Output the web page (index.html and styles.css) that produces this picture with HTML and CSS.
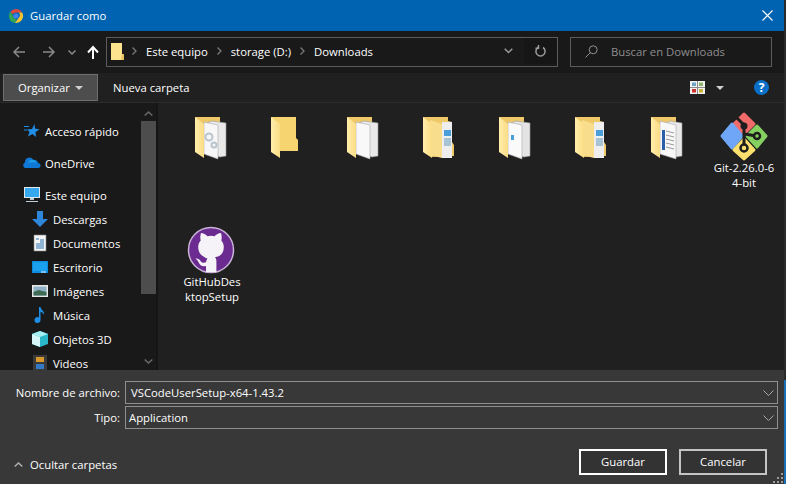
FILE: index.html
```html
<!DOCTYPE html>
<html lang="es">
<head>
    <meta charset="UTF-8">
    <title>Guardar como</title>
    <link rel="stylesheet" href="styles.css">
</head>
<body>
    <svg class="defs" width="0" height="0">
        <defs>
            <linearGradient id="flap" x1="0" y1="0" x2="1" y2="0">
                <stop offset="0" stop-color="#ffeeab"/>
                <stop offset="1" stop-color="#fbdc85"/>
            </linearGradient>
            <symbol id="folder-back" viewBox="0 0 48 48">
                <path d="M11 5H36V41H20Z" fill="#eec869"/>
            </symbol>
            <symbol id="folder-flap" viewBox="0 0 48 48">
                <path d="M11 5L20 12V46L11 40Z" fill="url(#flap)"/>
            </symbol>
        </defs>
    </svg>

    <div class="dialog">
        <div class="titlebar">
            <svg class="chrome-logo" width="14" height="14" viewBox="0 0 14 14">
                <path d="M7 0A7 7 0 0 1 13.1 3.6H7A3.4 3.4 0 0 0 3.8 5.6L1.5 2.7A7 7 0 0 1 7 0Z" fill="#e0483a"/>
                <path d="M1.5 2.7L4.3 7.8A3.4 3.4 0 0 0 7.8 10.3L6 14A7 7 0 0 1 1.5 2.7Z" fill="#34a653"/>
                <path d="M13.1 3.6A7 7 0 0 1 6 14L9.6 9A3.4 3.4 0 0 0 9.7 3.6Z" fill="#f8c530"/>
                <circle cx="7" cy="7" r="2.6" fill="#3f82ed"/>
            </svg>
            <span class="title">Guardar como</span>
            <svg class="close" width="11" height="11" viewBox="0 0 11 11">
                <path d="M.5.5l10 10M10.5.5l-10 10" stroke="#fff" stroke-width="1.1"/>
            </svg>
        </div>

        <div class="navbar">
            <div class="nav-buttons">
                <svg width="12" height="12" viewBox="0 0 12 12"><path d="M6 1L1 6l5 5M1 6h11" class="arrow-dim"/></svg>
                <svg class="nav-forward" width="12" height="12" viewBox="0 0 12 12"><path d="M6 1l5 5-5 5M11 6H0" class="arrow-dim"/></svg>
                <svg class="nav-recent" width="8" height="5" viewBox="0 0 8 5"><path d="M.5.5L4 4 7.5.5" class="arrow-dim"/></svg>
                <svg class="nav-up" width="12" height="13" viewBox="0 0 12 13"><path d="M1 6.5L6 1l5 5.500M6 1v12" class="arrow-up"/></svg>
            </div>
            <div class="address">
                <svg class="address-folder" width="14" height="17" viewBox="0 0 14 17"><path d="M0 0H11V11L13 12.500V17H0Z" fill="#fde38e"/><path d="M11 11h2v6h-3z" fill="#e8c25f"/></svg>
                <svg class="crumb-sep" width="5" height="8" viewBox="0 0 5 8"><path d="M.5.5L4 4 .5 7.500"/></svg>
                <span>Este equipo</span>
                <svg class="crumb-sep" width="5" height="8" viewBox="0 0 5 8"><path d="M.5.5L4 4 .5 7.500"/></svg>
                <span>storage (D:)</span>
                <svg class="crumb-sep" width="5" height="8" viewBox="0 0 5 8"><path d="M.5.5L4 4 .5 7.500"/></svg>
                <span>Downloads</span>
                <svg class="address-drop" width="9" height="6" viewBox="0 0 9 6"><path d="M.7.7L4.500 4.500 8.300.7"/></svg>
                <div class="address-refresh">
                    <svg width="11" height="12" viewBox="0 0 11 12"><path d="M3 2.500A4.600 4.600 0 1 0 8 2.500M3.500 0v3.200H.5"/></svg>
                </div>
            </div>
            <div class="search">
                <svg width="13" height="13" viewBox="0 0 13 13"><circle cx="8.200" cy="4.800" r="4"/><path d="M5.400 7.600L.5 12.500"/></svg>
                <span>Buscar en Downloads</span>
            </div>
        </div>

        <div class="commandbar">
            <div class="organize">Organizar<i class="caret"></i></div>
            <div class="new-folder">Nueva carpeta</div>
            <svg class="view-icon" width="15" height="13" viewBox="0 0 15 13">
                <rect width="15" height="13" fill="#f2f2f2"/>
                <path d="M7.500 0v13M0 6.500h15" stroke="#8a8a8a"/>
                <rect x="2" y="1.500" width="4" height="3.500" fill="#6fa5c9"/>
                <rect x="9" y="1.500" width="4" height="3.500" fill="#8fb36a"/>
                <rect x="2" y="8" width="4" height="3.500" fill="#c8352c"/>
                <rect x="9" y="8" width="4" height="3.500" fill="#c9b23a"/>
            </svg>
            <i class="caret view-caret"></i>
            <div class="help">?</div>
        </div>

        <div class="main">
            <div class="sidebar">
                <div class="tree">
                    <div class="tree-item top">
                        <svg width="16" height="16" viewBox="0 0 16 16"><path d="M10.500 1L11 5.500 15.500 6.500 11.500 9 12 14 8.500 11 4 13.500 5.500 9 3 6.500 8 6Z" fill="#1f8fe8"/><path d="M0 3.500h5M0 7h3" stroke="#1f8fe8"/></svg>
                        Acceso rápido
                    </div>
                    <div class="tree-item top gap">
                        <svg width="16" height="16" viewBox="0 0 16 16"><path d="M1 13a3 3 0 0 1 0-5.500A4.500 4.500 0 0 1 9.500 5 3.500 3.500 0 0 1 14 8a2.600 2.600 0 0 1 1 5Z" fill="#0f78d4"/><path d="M4 7.500A4.500 4.500 0 0 1 9.500 5 3.500 3.500 0 0 1 12.500 7.500Z" fill="#1c9be6"/></svg>
                        OneDrive
                    </div>
                    <div class="tree-item top gap">
                        <svg width="16" height="16" viewBox="0 0 16 16"><rect width="16" height="11" fill="#e0e8ee"/><rect x="1" y="1" width="14" height="9" fill="#35a8ee"/><path d="M6 11h4v2H6zM2 14h12v1H2z" fill="#c2ccd4"/></svg>
                        Este equipo
                    </div>
                    <div class="tree-item">
                        <svg width="16" height="16" viewBox="0 0 16 16"><path d="M5 0h6v8h5l-8 8-8-8h5Z" fill="#2e86d8"/></svg>
                        Descargas
                    </div>
                    <div class="tree-item">
                        <svg width="16" height="16" viewBox="0 0 16 16"><path d="M2 0h12v16H2Z" fill="#f4f4f4" stroke="#888" stroke-width=".6"/><path d="M4 4h3M8 5h4M8 7h4M4 9h8M4 11h8M4 13h8" stroke="#2c74b8"/></svg>
                        Documentos
                    </div>
                    <div class="tree-item">
                        <svg width="16" height="16" viewBox="0 0 16 16"><rect y="2" width="16" height="12" fill="#0d8ae0"/><rect x="1" y="3" width="14" height="9" fill="#1ba0ef"/><path d="M9 13h5" stroke="#e8f4fc"/></svg>
                        Escritorio
                    </div>
                    <div class="tree-item">
                        <svg width="16" height="16" viewBox="0 0 16 16"><rect y="2" width="16" height="12" fill="#e8e8e8"/><rect x="1.500" y="3.500" width="13" height="9" fill="#8fb2c8"/><path d="M1.500 9l5-2 8 2v3.500h-13Z" fill="#3f6b55"/></svg>
                        Imágenes
                    </div>
                    <div class="tree-item">
                        <svg width="16" height="16" viewBox="0 0 16 16"><path d="M7 0h1.500c.5 3 4 3.500 3.500 8-.8-2-2.200-3-3.500-3.200V13a3 3 0 1 1-1.500-2.500Z" fill="#1e8fe6"/></svg>
                        Música
                    </div>
                    <div class="tree-item">
                        <svg width="16" height="16" viewBox="0 0 16 16"><path d="M8 0l8 3v10l-8 3-8-3V3Z" fill="#2ab7c9"/><path d="M8 0l8 3-8 3-8-3Z" fill="#a5eef2"/><path d="M0 3l8 3v10l-8-3Z" fill="#d6f6f7"/></svg>
                        Objetos 3D
                    </div>
                    <div class="tree-item">
                        <svg width="16" height="16" viewBox="0 0 16 16"><rect x="1" width="14" height="16" fill="#3a3a3a"/><rect x="4" y="2" width="8" height="5" fill="#d9982b"/><rect x="4" y="9" width="8" height="5" fill="#3479c4"/></svg>
                        Videos
                    </div>
                </div>
                <div class="scrollbar">
                    <svg width="9" height="5" viewBox="0 0 9 5"><path d="M.7 4.500L4.500 1 8.300 4.500"/></svg>
                    <div class="thumb"></div>
                    <svg width="9" height="5" viewBox="0 0 9 5"><path d="M.7.5L4.500 4 8.300.5"/></svg>
                </div>
            </div>

            <div class="files">
                <div class="file">
                    <svg width="48" height="48" viewBox="4 0 48 48">
                        <use href="#folder-back"/>
                        <path d="M28 9l14 2V44l-6 1-16-5V12Z" fill="#e9e9e9" stroke="#9a9a9a" stroke-width=".6"/>
                        <path d="M20 10l14 3V47l-14-5Z" fill="#f7f7f7" stroke="#aaa" stroke-width=".6"/>
                        <circle cx="25" cy="25" r="3.500" stroke="#b9c4cc" stroke-width="2"/>
                        <circle cx="30" cy="33" r="2.500" stroke="#b9c4cc" stroke-width="2"/>
                        <use href="#folder-flap"/>
                    </svg>
                </div>
                <div class="file">
                    <svg width="48" height="48" viewBox="4 0 48 48">
                        <path d="M11 5H36V26L38 28V39H20Z" fill="#f6d570"/>
                        <use href="#folder-flap"/>
                    </svg>
                </div>
                <div class="file">
                    <svg width="48" height="48" viewBox="4 0 48 48">
                        <use href="#folder-back"/>
                        <path d="M28 9l14 2V44l-6 1-16-5V12Z" fill="#e9e9e9" stroke="#9a9a9a" stroke-width=".6"/>
                        <path d="M20 10l14 3V47l-14-5Z" fill="#f8f8f8" stroke="#aaa" stroke-width=".6"/>
                        <use href="#folder-flap"/>
                    </svg>
                </div>
                <div class="file">
                    <svg width="48" height="48" viewBox="4 0 48 48">
                        <path d="M11 5H36V9L40 10V30L42 33V44L20 45Z" fill="#eec869"/>
                        <path d="M30 10h10V46H30Z" fill="#eeeeee"/>
                        <path d="M32 18h7v6h-7z" fill="#4b9fd8"/>
                        <path d="M32 26h7v8h-7z" fill="#a8c4d4"/>
                        <path d="M18 8l12 4V46l-12-3Z" fill="#f8dd8d"/>
                        <use href="#folder-flap"/>
                    </svg>
                </div>
                <div class="file">
                    <svg width="48" height="48" viewBox="4 0 48 48">
                        <use href="#folder-back"/>
                        <path d="M28 9l14 2V44l-6 1-16-5V12Z" fill="#e4e4e4" stroke="#9a9a9a" stroke-width=".6"/>
                        <path d="M20 10l14 3V47l-14-5Z" fill="#fafafa" stroke="#aaa" stroke-width=".6"/>
                        <path d="M23 23h3v5h-3z" fill="#4b9fd8"/>
                        <use href="#folder-flap"/>
                    </svg>
                </div>
                <div class="file">
                    <svg width="48" height="48" viewBox="4 0 48 48">
                        <path d="M11 5H36V9L40 10V30L42 33V44L20 45Z" fill="#eec869"/>
                        <path d="M30 10h10V46H30Z" fill="#eeeeee"/>
                        <path d="M32 18h7v6h-7z" fill="#4b9fd8"/>
                        <path d="M32 26h7v8h-7z" fill="#a8c4d4"/>
                        <path d="M18 8l12 4V46l-12-3Z" fill="#f8dd8d"/>
                        <use href="#folder-flap"/>
                    </svg>
                </div>
                <div class="file">
                    <svg width="48" height="48" viewBox="4 0 48 48">
                        <use href="#folder-back"/>
                        <path d="M30 9l12 2V44l-6 1-12-5V12Z" fill="#e9e9e9" stroke="#9a9a9a" stroke-width=".6"/>
                        <path d="M20 9l16 4V47l-16-5Z" fill="#f8f8f8" stroke="#aaa" stroke-width=".6"/>
                        <path d="M22 18h3v20h-3z" fill="#2d5fa8"/>
                        <path d="M26 19l8 2M26 23l8 2M26 27l8 2M26 31l8 2M26 35l8 2" stroke="#9a9a9a"/>
                        <use href="#folder-flap"/>
                    </svg>
                </div>
                <div class="file">
                    <svg width="48" height="48" viewBox="0 0 48 48" stroke-linejoin="round">
                        <path d="M24 2L34 12 24 22 14 12Z" fill="#f26b6b" stroke="#f26b6b" stroke-width="3"/>
                        <path d="M37 14L46 24 37 35 27 24Z" fill="#85d160" stroke="#85d160" stroke-width="3"/>
                        <path d="M12 12L22 24 12 36 2 24Z" fill="#6fa6f7" stroke="#6fa6f7" stroke-width="3"/>
                        <path d="M24 27L34 38 24 47 14 38Z" fill="#fbe06e" stroke="#fbe06e" stroke-width="3"/>
                        <path d="M17 6L24 13V32M25 22L36 24" stroke="#1e1e1e" stroke-width="3"/>
                        <circle cx="24" cy="14" r="3.500" fill="#1e1e1e"/>
                        <circle cx="24" cy="36" r="3.500" fill="#fbe06e" stroke="#1e1e1e" stroke-width="2.500"/>
                        <circle cx="37" cy="24" r="3" fill="#85d160" stroke="#1e1e1e" stroke-width="2.500"/>
                    </svg>
                    <div class="file-name">Git-2.26.0-6<br>4-bit</div>
                </div>
                <div class="file">
                    <svg width="48" height="48" viewBox="1 1 48 48">
                        <circle cx="24" cy="25" r="22.500" fill="#6b2b90" stroke="#c9b3d6" stroke-width="1.500"/>
                        <path d="M14 8c2.200 0 5 1.600 6.500 3.200a14 14 0 0 1 7 0C29 9.600 31.800 8 34 8c.9 2.800.9 5 .3 7.400 1.700 1.900 2.500 4 2.500 6.500 0 6.500-3.700 9.500-8.800 10.400.9 1 1.400 2.300 1.400 3.700V47H19v-6c-3.800.7-6-.5-7.400-3.700-.9-1.900-1.900-2.800-3.300-3.700 2.800-.5 4.200 1 5.600 2.800.9 1.400 2.800 1.700 5.100.9.200-1.400.6-2.700 1.400-3.700C15.200 31.400 11.200 28.400 11.200 21.900c0-2.500.8-4.600 2.500-6.500-.6-2.400-.6-4.600.3-7.400Z" fill="#f6f3f8"/>
                    </svg>
                    <div class="file-name">GitHubDes<br>ktopSetup</div>
                </div>
            </div>
        </div>

        <div class="footer">
            <div class="form">
                <label>Nombre de archivo:</label>
                <div class="field name-field">VSCodeUserSetup-x64-1.43.2<svg width="11" height="6" viewBox="0 0 11 6"><path d="M.5.5l5 5 5-5"/></svg></div>
                <label>Tipo:</label>
                <div class="field type-field">Application<svg width="11" height="6" viewBox="0 0 11 6"><path d="M.5.5l5 5 5-5"/></svg></div>
            </div>
            <div class="actions">
                <div class="hide-folders">
                    <svg width="9" height="5" viewBox="0 0 9 5"><path d="M.7 4.500L4.500 1 8.300 4.500"/></svg>
                    Ocultar carpetas
                </div>
                <button class="btn primary">Guardar</button>
                <button class="btn">Cancelar</button>
            </div>
            <svg class="grip" width="11" height="11" viewBox="0 0 11 11">
                <path d="M8 0h2v2H8zM4 4h2v2H4zM8 4h2v2H8zM0 8h2v2H0zM4 8h2v2H4zM8 8h2v2H8z" fill="#9a9a9a"/>
            </svg>
        </div>
    </div>
</body>
</html>
```

FILE: styles.css
```css
* {
    box-sizing: border-box;
}

html, body {
    margin: 0;
    height: 100%;
}

body {
    background: linear-gradient(#2a2a2a 0, #2a2a2a 380px, #1a6fb5 380px);
    font-family: "Open Sans", "Noto Sans", sans-serif;
    font-size: 11.3px;
    color: #fff;
    overflow: hidden;
}

.defs {
    position: absolute;
}

svg {
    display: block;
    flex: none;
    fill: none;
    overflow: visible;
}

.dialog {
    width: 784px;
    height: 484px;
    display: flex;
    flex-direction: column;
}

/* title bar */
.titlebar {
    height: 31px;
    background-color: #0063b1;
    display: flex;
    align-items: center;
    padding: 0 11px 0 9px;
}

.title {
    margin-left: 7px;
}

.close {
    margin-left: auto;
}

/* back/forward, address, search */
.navbar {
    height: 42px;
    background-color: #191919;
    display: flex;
    align-items: center;
    padding: 0 12px 0 13px;
}

.nav-buttons {
    display: flex;
    align-items: center;
    width: 93px;
}

.nav-forward {
    margin-left: 18px;
}

.nav-recent {
    margin-left: 13px;
}

.nav-up {
    margin-left: 11px;
}

.arrow-dim {
    stroke: #8a8a8a;
    stroke-width: 1.5;
}

.arrow-up {
    stroke: #fff;
    stroke-width: 2;
}

.address {
    width: 452px;
    height: 30px;
    border: 1px solid #5c5c5c;
    display: flex;
    align-items: center;
    padding: 0 0 2px 4px;
    background-color: #191919;
}

.crumb-sep {
    margin: 0 9px;
}

.crumb-sep path {
    stroke: #7a7a7a;
    stroke-width: 1.3;
}

.address-folder + .crumb-sep {
    margin-left: 7px;
}

.address-drop {
    margin-left: auto;
}

.address-drop path {
    stroke: #9a9a9a;
    stroke-width: 1.5;
}

.address-refresh {
    width: 33px;
    height: 26px;
    margin-left: 11px;
    background-color: #161616;
    display: flex;
    align-items: center;
    justify-content: center;
}

.address-refresh path {
    stroke: #9a9a9a;
    stroke-width: 1.5;
}

.search {
    width: 202px;
    height: 30px;
    margin-left: 12px;
    border: 1px solid #5c5c5c;
    display: flex;
    align-items: center;
    padding: 0 0 2px 14px;
    color: #8e8e8e;
}

.search svg {
    stroke: #8e8e8e;
    margin-right: 13px;
}

/* organize bar */
.commandbar {
    height: 30px;
    background-color: #202020;
    border-bottom: 1px solid #2b2b2b;
    display: flex;
    align-items: center;
    padding-left: 3px;
}

.organize {
    width: 95px;
    height: 27px;
    background-color: #4d4d4d;
    border: 1px solid #6e6e6e;
    display: flex;
    align-items: center;
    padding-left: 14px;
}

.caret {
    width: 0;
    height: 0;
    border: 4px solid transparent;
    border-top: 4px solid #d0d0d0;
    border-bottom: 0;
    margin-left: 5px;
}

.new-folder {
    margin-left: 15px;
}

.view-icon {
    margin-left: auto;
}

.view-caret {
    margin-left: 11px;
}

.help {
    width: 15px;
    height: 15px;
    border-radius: 50%;
    background-color: #0a6fc9;
    margin: 0 15px 0 30px;
    font-size: 12px;
    font-weight: bold;
    line-height: 15px;
    text-align: center;
}

/* nav tree and files */
.main {
    height: 267px;
    display: flex;
    overflow: hidden;
}

.sidebar {
    width: 158px;
    display: flex;
    flex: none;
    background-color: #191919;
    border-right: 2px solid #151515;
}

.tree {
    width: 140px;
    padding-top: 16px;
}

.tree-item {
    height: 24px;
    display: flex;
    align-items: center;
    gap: 5px;
    padding-left: 32px;
    white-space: nowrap;
}

.tree-item.top {
    padding-left: 24px;
}

.tree-item.gap {
    margin-top: 8px;
}

.scrollbar {
    width: 16px;
    display: flex;
    flex-direction: column;
    align-items: center;
    padding-top: 8px;
}

.scrollbar path {
    stroke: #6a6a6a;
    stroke-width: 1.600;
}

.thumb {
    width: 15px;
    height: 173px;
    margin: 5px 0 65px;
    background-color: #4d4d4d;
}

.files {
    flex: 1;
    background-color: #202020;
    display: grid;
    grid-template-columns: repeat(8, 76px);
    grid-auto-rows: 114px;
    padding: 9px 0 0 16px;
}

.file {
    display: flex;
    flex-direction: column;
    align-items: center;
}

.file-name {
    line-height: 15px;
    text-align: center;
}

/* bottom form */
.footer {
    flex: 1;
    background-color: #383838;
    padding: 11px 6px 0 0;
    position: relative;
}

.form {
    display: grid;
    grid-template-columns: 120px 1fr;
    column-gap: 5px;
    row-gap: 2px;
    align-items: center;
}

.form label {
    text-align: right;
}

.field {
    height: 23px;
    border: 1px solid #8f8f8f;
    display: flex;
    align-items: center;
    justify-content: space-between;
    padding-right: 3px;
}

.field svg path {
    stroke: #a8a8a8;
}

.name-field {
    padding-left: 5px;
}

.type-field {
    padding-left: 3px;
}

.actions {
    display: flex;
    align-items: center;
    margin-top: 20px;
    padding-right: 11px;
}

.hide-folders {
    display: flex;
    align-items: center;
    gap: 7px;
    margin: 4px auto 0 0;
    padding-left: 14px;
}

.hide-folders path {
    stroke: #b0b0b0;
    stroke-width: 1.500;
}

.btn {
    width: 88px;
    height: 26px;
    margin-left: 12px;
    background-color: #333;
    border: 2px solid #c4c4c4;
    color: #fff;
    font: inherit;
    padding: 0 0 2px;
}

.btn.primary {
    border-color: #fff;
}

.grip {
    position: absolute;
    right: 0;
    bottom: 0;
}
```
